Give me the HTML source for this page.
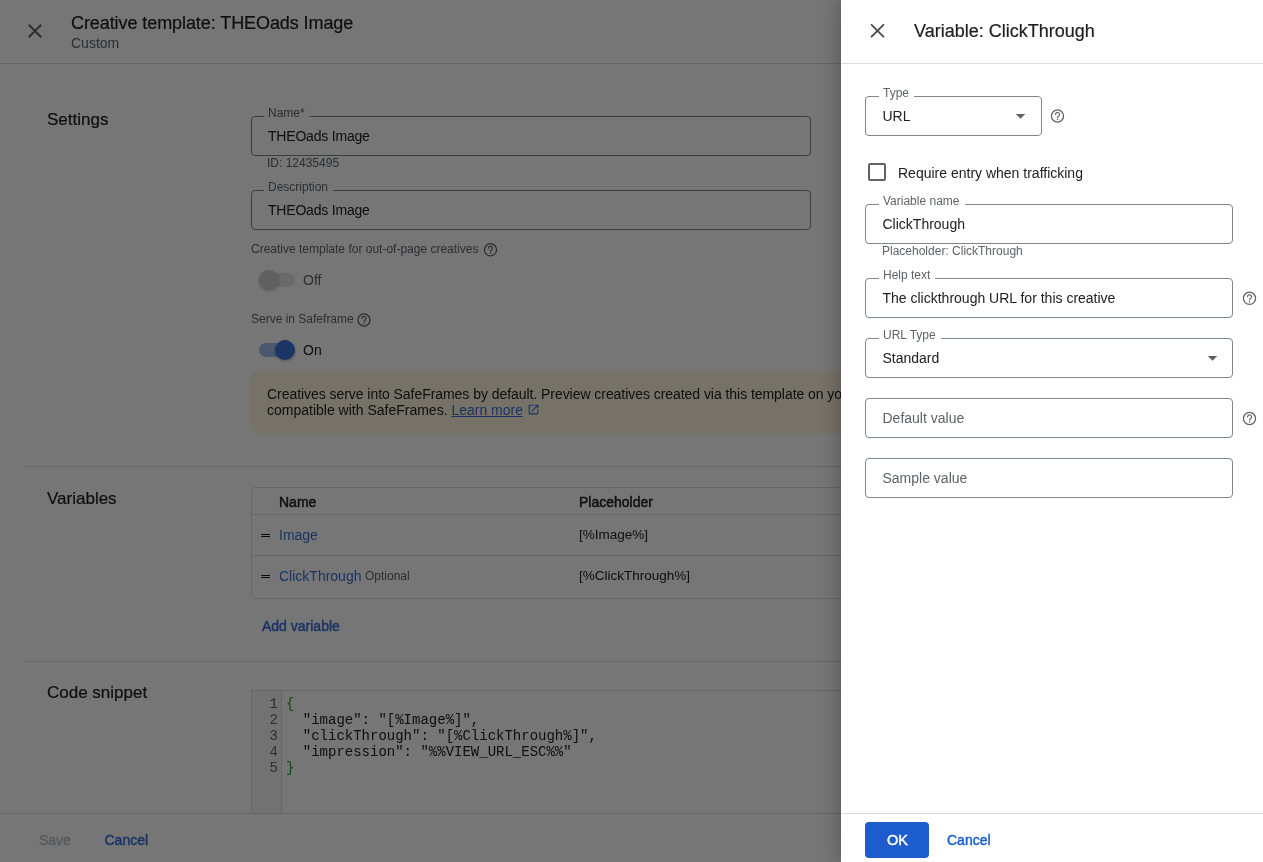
<!DOCTYPE html>
<html><head><meta charset="utf-8">
<style>
*{box-sizing:border-box;margin:0;padding:0}
html,body{width:1263px;height:862px;overflow:hidden;background:#fff;font-family:"Liberation Sans",sans-serif;color:#202124}
.a{position:absolute;white-space:nowrap;line-height:1}
.page{position:absolute;left:0;top:0;width:1263px;height:862px;background:#fff;will-change:transform}
.hline{position:absolute;height:1px;background:#dadce0}
.field{position:absolute;border:1px solid #80868b;border-radius:4px;background:transparent}
.lbl{position:absolute;font-size:12px;line-height:1;color:#5f6368;background:#fff;padding:0 5px 0 4px;white-space:nowrap}
.scrim{position:absolute;left:0;top:0;width:1263px;height:862px;background:rgba(0,0,0,.538)}
.panel{position:absolute;left:841px;top:0;width:422px;height:862px;background:#fff;will-change:transform;box-shadow:0 0 20px rgba(0,0,0,.3)}
svg{position:absolute;display:block}
.md{-webkit-text-stroke:0.45px currentColor}
</style></head><body>
<svg width="0" height="0" style="position:absolute"><defs><g id="help"><circle cx="12" cy="12" r="9.1" fill="none" stroke="#5f6368" stroke-width="1.9"/><path d="M9.1 9.6A2.95 2.95 0 1 1 14.4 11.4C13.5 12.5 12.1 12.9 12.1 14.3" fill="none" stroke="#5f6368" stroke-width="1.8" stroke-linecap="round"/><circle cx="12.1" cy="17.1" r="1.1" fill="#5f6368"/></g></defs></svg>
<div class="page">
  <!-- header -->
  <svg style="left:23px;top:19px" width="24" height="24" viewBox="0 0 24 24"><path fill="#5f6368" d="M19 6.41L17.59 5 12 10.59 6.41 5 5 6.41 10.59 12 5 17.59 6.41 19 12 13.41 17.59 19 19 17.59 13.41 12z"/></svg>
  <div class="a" style="left:71px;top:13.8px;font-size:18px;-webkit-text-stroke:0.2px currentColor;letter-spacing:-0.08px">Creative template: THEOads Image</div>
  <div class="a" style="left:71px;top:35.6px;font-size:14px;color:#5f6368">Custom</div>
  <div class="hline" style="left:0;top:63px;width:1263px"></div>

  <!-- settings -->
  <div class="a" style="left:47px;top:110.6px;font-size:17px;-webkit-text-stroke:0.2px currentColor">Settings</div>
  <div class="field" style="left:251px;top:116px;width:560px;height:40px"></div>
  <div class="lbl" style="left:264px;top:107px">Name*</div>
  <div class="a" style="left:268px;top:128.5px;font-size:14px;letter-spacing:-0.2px">THEOads Image</div>
  <div class="a" style="left:267px;top:156.6px;font-size:12px;color:#5f6368">ID: 12435495</div>

  <div class="field" style="left:251px;top:190px;width:560px;height:40px"></div>
  <div class="lbl" style="left:264px;top:181px">Description</div>
  <div class="a" style="left:268px;top:202.6px;font-size:14px;letter-spacing:-0.2px">THEOads Image</div>

  <div class="a" style="left:251px;top:243.3px;font-size:12px;color:#5f6368">Creative template for out-of-page creatives</div>
  <svg style="left:482px;top:241px" width="16" height="16" viewBox="0 0 24 24"><use href="#help" transform="translate(0.75 1.2)"/></svg>

  <div style="position:absolute;left:259px;top:273px;width:36px;height:14px;border-radius:7px;background:#e6e6e6"></div>
  <div style="position:absolute;left:258.5px;top:270px;width:20px;height:20px;border-radius:50%;background:#d0d0d0;box-shadow:0 1px 3px rgba(0,0,0,.25)"></div>
  <div class="a" style="left:303px;top:273.1px;font-size:14px;color:#5f6368">Off</div>

  <div class="a" style="left:251px;top:313.1px;font-size:12px;color:#5f6368">Serve in Safeframe</div>
  <svg style="left:356px;top:312px" width="16" height="16" viewBox="0 0 24 24"><use href="#help" transform="translate(0 0)"/></svg>

  <div style="position:absolute;left:259px;top:343px;width:36px;height:14px;border-radius:7px;background:#a2bdee"></div>
  <div style="position:absolute;left:275px;top:340px;width:20px;height:20px;border-radius:50%;background:#3a73dc;box-shadow:0 1px 3px rgba(0,0,0,.3)"></div>
  <div class="a" style="left:303px;top:343.3px;font-size:14px">On</div>

  <div style="position:absolute;left:251px;top:370px;width:1000px;height:64px;border-radius:8px;background:#fef7e0"></div>
  <div class="a" style="left:267px;top:386.9px;font-size:14px;letter-spacing:-0.05px">Creatives serve into SafeFrames by default. Preview creatives created via this template on your site to ensure they are</div>
  <div class="a" style="left:267px;top:403.4px;font-size:14px">compatible with SafeFrames. <span style="color:#3a6fd6;text-decoration:underline">Learn more</span></div>
  <svg style="left:527px;top:403px" width="13" height="13" viewBox="0 0 24 24"><path fill="#3a6fd6" d="M19 19H5V5h7V3H5a2 2 0 0 0-2 2v14a2 2 0 0 0 2 2h14c1.1 0 2-.9 2-2v-7h-2v7zM14 3v2h3.59l-9.83 9.83 1.41 1.41L19 6.41V10h2V3h-7z"/></svg>

  <!-- variables -->
  <div class="hline" style="left:23px;top:466px;width:1220px"></div>
  <div class="a" style="left:47px;top:489.6px;font-size:17px;-webkit-text-stroke:0.2px currentColor">Variables</div>
  <div style="position:absolute;left:251px;top:487px;width:1000px;height:112px;border:1px solid #dadce0;border-radius:4px"></div>
  <div class="a md" style="left:279px;top:495.4px;font-size:14px">Name</div>
  <div class="a md" style="left:579px;top:495.4px;font-size:14px">Placeholder</div>
  <div class="hline" style="left:252px;top:514px;width:1000px"></div>
  <div style="position:absolute;left:261px;top:534px;width:9px;height:1px;background:#1f1f1f"></div>
  <div style="position:absolute;left:261px;top:536px;width:9px;height:1px;background:#1f1f1f"></div>
  <div class="a" style="left:279px;top:528.1px;font-size:14px;color:#3a6fd6">Image</div>
  <div class="a" style="left:579px;top:528.1px;font-size:13.5px">[%Image%]</div>
  <div class="hline" style="left:252px;top:555px;width:1000px"></div>
  <div style="position:absolute;left:261px;top:575px;width:9px;height:1px;background:#1f1f1f"></div>
  <div style="position:absolute;left:261px;top:577px;width:9px;height:1px;background:#1f1f1f"></div>
  <div class="a" style="left:279px;top:569.3px;font-size:14px;color:#3a6fd6">ClickThrough</div>
  <div class="a" style="left:365px;top:569.9px;font-size:12px;color:#5f6368">Optional</div>
  <div class="a" style="left:579px;top:569.3px;font-size:13.5px">[%ClickThrough%]</div>
  <div class="a md" style="left:262px;top:619px;font-size:14px;color:#3a6fd6">Add variable</div>

  <!-- code snippet -->
  <div class="hline" style="left:23px;top:661px;width:1220px"></div>
  <div class="a" style="left:47px;top:684.4px;font-size:17px;-webkit-text-stroke:0.2px currentColor">Code snippet</div>
  <div style="position:absolute;left:251px;top:690px;width:1000px;height:140px;border:1px solid #dadce0;background:#fff"></div>
  <div style="position:absolute;left:252px;top:691px;width:30px;height:130px;background:#f7f7f7;border-right:1px solid #dadce0"></div>
  <pre style="position:absolute;left:252px;top:696px;width:26px;font-family:'Liberation Mono',monospace;font-size:14px;line-height:16px;color:#5f6368;text-align:right">1
2
3
4
5</pre>
  <pre style="position:absolute;left:286px;top:696px;font-family:'Liberation Mono',monospace;font-size:14px;line-height:16px;color:#202124"><span style="color:#10a810">{</span>
  "image": "[%Image%]",
  "clickThrough": "[%ClickThrough%]",
  "impression": "%%VIEW_URL_ESC%%"
<span style="color:#10a810">}</span></pre>

  <!-- footer -->
  <div style="position:absolute;left:0;top:813px;width:1263px;height:49px;background:#fff;border-top:1px solid #dadce0"></div>
  <div class="a md" style="left:39px;top:833.1px;font-size:14px;color:#bdc1c6">Save</div>
  <div class="a md" style="left:104.5px;top:833.1px;font-size:14px;color:#3a6fd6">Cancel</div>
</div>

<div class="scrim"></div>

<div class="panel">
  <svg style="left:24px;top:19px" width="24" height="24" viewBox="0 0 24 24"><path d="M6.6 5.9L18.4 17.7M18.4 5.9L6.6 17.7" stroke="#474a4f" stroke-width="1.8" stroke-linecap="round" fill="none"/></svg>
  <div class="a" style="left:73px;top:22px;font-size:18px;-webkit-text-stroke:0.2px currentColor">Variable: ClickThrough</div>
  <div class="hline" style="left:1px;top:63px;width:421px"></div>

  <div class="field" style="left:24px;top:96px;width:177px;height:40px"></div>
  <div class="lbl" style="left:38px;top:86.5px">Type</div>
  <div class="a" style="left:41.5px;top:109.1px;font-size:14px">URL</div>
  <svg style="left:174px;top:113px" width="12" height="7" viewBox="0 0 12 7"><path d="M0.8 0.9H10.3L5.55 5.75z" fill="#5f6368"/></svg>
  <svg style="left:208px;top:108px" width="16" height="16" viewBox="0 0 24 24"><use href="#help" transform="translate(0.75 0)"/></svg>

  <div style="position:absolute;left:27px;top:163px;width:18px;height:18px;border:2px solid #5f6368;border-radius:2px"></div>
  <div class="a" style="left:57px;top:165.5px;font-size:14px">Require entry when trafficking</div>

  <div class="field" style="left:24px;top:204px;width:368px;height:40px"></div>
  <div class="lbl" style="left:38px;top:195px">Variable name</div>
  <div class="a" style="left:41.5px;top:216.9px;font-size:14px">ClickThrough</div>
  <div class="a" style="left:41px;top:245.4px;font-size:12px;color:#5f6368">Placeholder: ClickThrough</div>

  <div class="field" style="left:24px;top:278px;width:368px;height:40px"></div>
  <div class="lbl" style="left:38px;top:269px">Help text</div>
  <div class="a" style="left:41.5px;top:291px;font-size:14px">The clickthrough URL for this creative</div>
  <svg style="left:400px;top:290px" width="16" height="16" viewBox="0 0 24 24"><use href="#help" transform="translate(0.75 0.45)"/></svg>

  <div class="field" style="left:24px;top:338px;width:368px;height:40px"></div>
  <div class="lbl" style="left:38px;top:329px">URL Type</div>
  <div class="a" style="left:41.5px;top:351px;font-size:14px">Standard</div>
  <svg style="left:366px;top:355px" width="12" height="7" viewBox="0 0 12 7"><path d="M0.8 1.0H10.2L5.5 5.8z" fill="#5f6368"/></svg>

  <div class="field" style="left:24px;top:398px;width:368px;height:40px"></div>
  <div class="a" style="left:41.5px;top:411px;font-size:14px;color:#5f6368">Default value</div>
  <svg style="left:400px;top:410px" width="16" height="16" viewBox="0 0 24 24"><use href="#help" transform="translate(0.75 0.75)"/></svg>

  <div class="field" style="left:24px;top:458px;width:368px;height:40px"></div>
  <div class="a" style="left:41.5px;top:471px;font-size:14px;color:#5f6368">Sample value</div>

  <div class="hline" style="left:1px;top:813px;width:421px"></div>
  <div style="position:absolute;left:24px;top:822px;width:64px;height:36px;border-radius:4px;background:#1c5ccd"></div>
  <div class="a md" style="left:46px;top:833.1px;font-size:14.5px;color:#fff">OK</div>
  <div class="a md" style="left:106px;top:833.1px;font-size:14px;color:#1a5dd0">Cancel</div>
</div>
</body></html>
